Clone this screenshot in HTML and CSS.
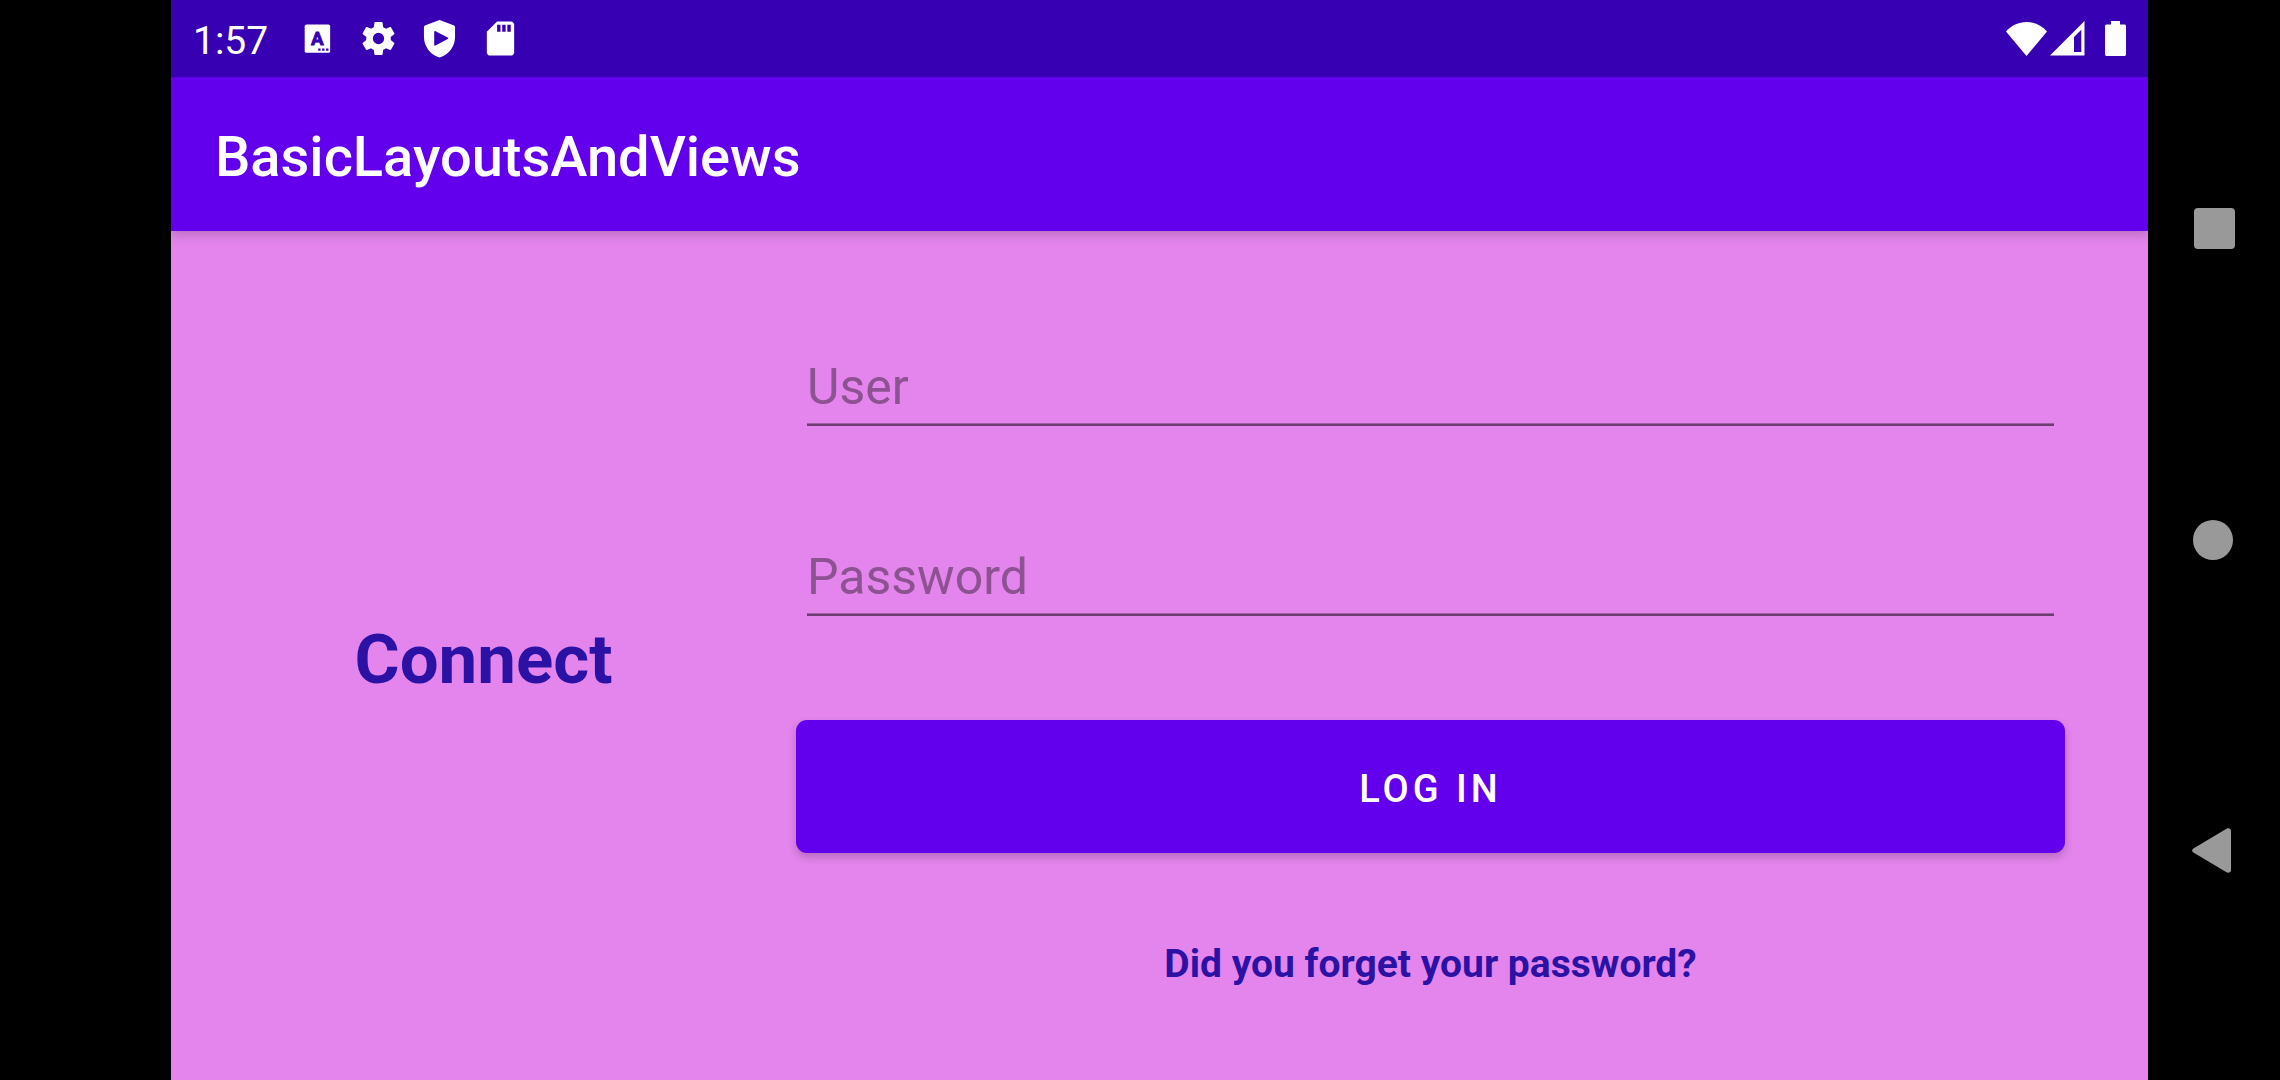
FILE: index.html
```html
<!DOCTYPE html>
<html lang="en">
<head>
<meta charset="utf-8">
<meta name="viewport" content="width=device-width, initial-scale=1">
<title>BasicLayoutsAndViews</title>
<link rel="stylesheet" href="styles.css">
</head>
<body>
<div class="device">
  <div class="app">
    <div class="status-bar">
      <span class="clock">1:57</span>
      <div class="notifications">
        <svg class="notification" viewBox="0 0 24 24" aria-hidden="true">
          <rect class="solid" x="4.5" y="3.8" width="14.9" height="16.6" rx="1"/>
          <text class="badge-letter" x="11.9" y="16">A</text>
          <path class="cutout" d="M12.4 17.8h1.4v1.4h-1.4zM14.7 17.8h1.4v1.4h-1.4zM17 17.8h1.4v1.4H17z"/>
        </svg>
        <svg class="notification" viewBox="0 0 24 24" aria-hidden="true">
          <path class="solid" d="M19.14 12.94c.04-.3.06-.61.06-.94 0-.32-.02-.64-.07-.94l2.03-1.58c.18-.14.23-.41.12-.61l-1.92-3.32c-.12-.22-.37-.29-.59-.22l-2.39.96c-.5-.38-1.03-.7-1.62-.94l-.36-2.54c-.04-.24-.24-.41-.48-.41h-3.84c-.24 0-.43.17-.47.41l-.36 2.54c-.59.24-1.13.57-1.62.94l-2.39-.96c-.22-.08-.47 0-.59.22L2.74 8.87c-.12.21-.08.47.12.61l2.03 1.58c-.05.3-.09.63-.09.94s.02.64.07.94l-2.03 1.58c-.18.14-.23.41-.12.61l1.92 3.32c.12.22.37.29.59.22l2.39-.96c.5.38 1.03.7 1.62.94l.36 2.54c.05.24.24.41.48.41h3.84c.24 0 .44-.17.47-.41l.36-2.54c.59-.24 1.13-.56 1.62-.94l2.39.96c.22.08.47 0 .59-.22l1.92-3.32c.12-.22.07-.47-.12-.61l-2.01-1.58zM12 15.3a3.3 3.3 0 1 1 0-6.6 3.3 3.3 0 0 1 0 6.6z"/>
        </svg>
        <svg class="notification" viewBox="0 0 24 24" aria-hidden="true">
          <path class="solid" d="M12 1.2 20.2 4.3c.5.2.9.6.9 1.2V11c0 5.6-3.6 10.6-9.1 12.1C6.500 21.600 2.900 16.600 2.900 11V5.500c0-.6.4-1 .9-1.200z"/>
          <path class="cutout" d="M8.900 8.200c0-.5.400-.7.800-.5l7.100 3.700c.4.2.4.700 0 .9l-7.100 3.800c-.4.2-.8 0-.8-.5z"/>
        </svg>
        <svg class="notification" viewBox="0 0 24 24" aria-hidden="true">
          <path class="solid" d="M18 2h-8L4 8v12c0 1.100.9 2 2 2h12c1.100 0 2-.9 2-2V4c0-1.100-.9-2-2-2z"/>
          <path class="cutout" d="M10 4h2v4h-2zM13 4h2v4h-2zM16 4h2v4h-2z"/>
        </svg>
      </div>
      <div class="indicators">
        <svg class="wifi" viewBox="0 0 41 34" role="img" aria-label="Wi-Fi">
          <path class="solid" d="M0 9.500C5.500 3.500 12.500 0 20.500 0S35.500 3.500 41 9.500L20.500 34z"/>
        </svg>
        <svg class="signal" viewBox="0 0 35 35" role="img" aria-label="Mobile signal">
          <path class="solid" fill-rule="evenodd" d="M0 34.500 34.500 0v34.500zM24 31h7.300V8.700L24 16z"/>
        </svg>
        <svg class="battery" viewBox="0 0 21 35" role="img" aria-label="Battery full">
          <path class="solid" d="M6 0h9v3.500h4.500c.8 0 1.500.7 1.500 1.500v28.500c0 .8-.7 1.500-1.500 1.500h-18C.7 35 0 34.300 0 33.500V5c0-.8.7-1.500 1.500-1.500H6z"/>
        </svg>
      </div>
    </div>
    <header class="app-bar">
      <h1 class="app-title">BasicLayoutsAndViews</h1>
    </header>
    <main class="content">
      <h2 class="heading">Connect</h2>
      <form class="login">
        <input class="field" type="text" placeholder="User" aria-label="User">
        <input class="field field-password" type="password" placeholder="Password" aria-label="Password">
        <button class="submit" type="button">LOG IN</button>
        <a class="forgot" href="#">Did you forget your password?</a>
      </form>
    </main>
  </div>
  <nav class="system-nav" aria-label="System navigation">
    <button class="nav-button" type="button" aria-label="Overview">
      <svg class="nav-icon" viewBox="0 0 48 48"><rect x="4" y="3" width="41" height="41" rx="4"/></svg>
    </button>
    <button class="nav-button" type="button" aria-label="Home">
      <svg class="nav-icon" viewBox="0 0 48 48"><circle cx="23" cy="24" r="20"/></svg>
    </button>
    <button class="nav-button" type="button" aria-label="Back">
      <svg class="nav-icon" viewBox="0 0 48 48"><path d="M3.400 21.500 36.500 1.700c2-1.100 4.500 0 4.500 2.300v39c0 2.300-2.500 3.400-4.500 2.300L3.400 25.500c-1.700-1-1.700-3 0-4z"/></svg>
    </button>
  </nav>
</div>
</body>
</html>
```

FILE: styles.css
```css
* {
  box-sizing: border-box;
}

body {
  margin: 0;
  background: #000;
  font-family: Roboto, "Liberation Sans", sans-serif;
}

.device {
  display: grid;
  grid-template-columns: 1fr 132px;
  min-height: 100vh;
  padding-left: 171px;
}

.app {
  display: flex;
  flex-direction: column;
  background: #e385ec;
}

.solid {
  fill: #fff;
}

.cutout {
  fill: #3700b3;
}

/* Status bar */
.status-bar {
  display: flex;
  align-items: center;
  height: 77px;
  padding: 0 22px;
  background: #3700b3;
  color: #fff;
}

.clock {
  padding-top: 4px;
  font-size: 39px;
  line-height: 46px;
}

.notifications {
  display: flex;
  gap: 20px;
  margin-left: 29px;
}

.notification {
  width: 41px;
  height: 41px;
}

.badge-letter {
  fill: #3700b3;
  stroke: #3700b3;
  stroke-width: 0.5px;
  font-size: 11px;
  font-weight: 700;
  text-anchor: middle;
}

.indicators {
  display: flex;
  align-items: center;
  margin-left: auto;
}

.wifi {
  width: 41px;
  height: 34px;
}

.signal {
  width: 35px;
  height: 35px;
  margin-left: 3px;
}

.battery {
  width: 21px;
  height: 35px;
  margin-left: 20px;
}

/* App bar */
.app-bar {
  display: flex;
  align-items: center;
  height: 154px;
  padding: 5px 44px 0;
  background: #6200ee;
  box-shadow: 0 2px 12px rgba(0, 0, 0, 0.24);
  clip-path: inset(0 0 -20px 0);
}

.app-title {
  margin: 0;
  color: #fff;
  font-size: 56px;
  font-weight: 500;
  line-height: 64px;
}

/* Login screen */
.content {
  display: grid;
  flex: 1;
  grid-template-columns: 33fr 67fr;
  padding-right: 83px;
}

.heading {
  align-self: center;
  margin: 0;
  padding-top: 8px;
  color: #2b12a5;
  font-size: 69px;
  font-weight: 700;
  line-height: 80px;
  text-align: center;
}

.login {
  display: flex;
  flex-direction: column;
  padding: 127px 0 64px;
}

.field {
  height: 68px;
  margin: 0 11px;
  padding: 0 0 8px;
  border: 0;
  border-bottom: 2px solid #6b3d70;
  border-radius: 0;
  outline: 0;
  background: none;
  box-shadow: inset 0 -1px #a05da6;
  color: #000;
  font-family: inherit;
  font-size: 50px;
  line-height: 58px;
}

.field::placeholder {
  color: #8d5292;
  opacity: 1;
}

.field-password {
  margin-top: 122px;
}

.submit {
  height: 133px;
  margin-top: 104px;
  padding: 4px 0 0;
  border: 0;
  border-radius: 11px;
  background: #6200ee;
  box-shadow: 0 4px 8px rgba(0, 0, 0, 0.2);
  color: #fff;
  font-family: inherit;
  font-size: 38px;
  font-weight: 500;
  letter-spacing: 4px;
}

.forgot {
  align-self: center;
  margin-top: 88px;
  color: #2b12a5;
  font-size: 39px;
  font-weight: 700;
  line-height: 46px;
  text-decoration: none;
}

/* System navigation */
.system-nav {
  display: flex;
  flex-direction: column;
  padding: 73px 0;
}

.nav-button {
  display: flex;
  flex: 1;
  align-items: center;
  justify-content: center;
  padding: 0;
  border: 0;
  background: none;
}

.nav-icon {
  width: 48px;
  height: 48px;
  fill: #999;
}
```
